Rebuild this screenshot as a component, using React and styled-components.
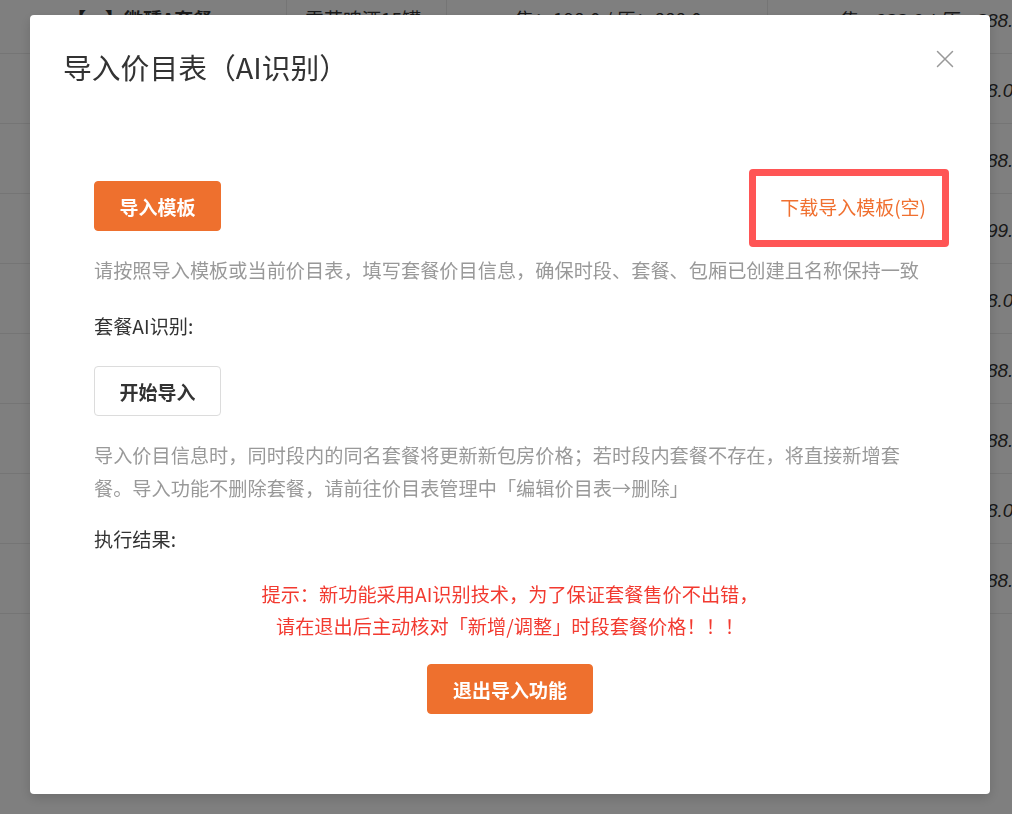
import styled, { createGlobalStyle } from "styled-components";

const GlobalStyle = createGlobalStyle`
    html, body {
        margin: 0;
        padding: 0;
        background: #ffffff;
    }
    body {
        font-family: "Noto Sans CJK SC", "Noto Sans", sans-serif;
        overflow: hidden;
    }
`;

// only the top row and the right price column peek out from behind the modal
const firstRow = ["【一】微醺A套餐", "雪花啤酒15罐", "售：198.0 / 原：888.0", "售：288.0 / 原：888.0"];
const prices = [
    "售：198.0 / 原：88.0",
    "售：288.0 / 原：888.0",
    "售：199.0 / 原：999.0",
    "售：168.0 / 原：88.0",
    "售：288.0 / 原：888.0",
    "售：238.0 / 原：888.0",
    "售：128.0 / 原：88.0",
    "售：188.0 / 原：888.0",
];

function CloseIcon() {
    return (
        <svg width="18" height="18" viewBox="0 0 18 18" fill="none">
            <path d="M1.5 1.5 L16.5 16.5 M16.5 1.5 L1.5 16.5" stroke="#999" strokeWidth="1.5" strokeLinecap="round" />
        </svg>
    );
}

export default function App() {
    return (
        <>
            <GlobalStyle />
            <Table>
                <Row>
                    <Cell $w="287px" $pad="67px" $bold>{firstRow[0]}</Cell>
                    <Cell $w="160px" $pad="18px">{firstRow[1]}</Cell>
                    <Cell $w="321px" $pad="68px">{firstRow[2]}</Cell>
                    <Cell $w="244px" $pad="69px" $price>{firstRow[3]}</Cell>
                </Row>
                {prices.map((p, i) => (
                    <Row key={i}>
                        <Cell $w="287px" $pad="67px" />
                        <Cell $w="160px" $pad="18px" />
                        <Cell $w="321px" $pad="68px" />
                        <Cell $w="244px" $pad="69px" $price>{p}</Cell>
                    </Row>
                ))}
            </Table>

            <Overlay>
                <Modal>
                    <Header>
                        <Title>导入价目表（AI识别）</Title>
                        <CloseBtn aria-label="close">
                            <CloseIcon />
                        </CloseBtn>
                    </Header>

                    <Body>
                        <ActionRow>
                            <Button $primary>导入模板</Button>
                            <DownloadLink>下载导入模板(空)</DownloadLink>
                        </ActionRow>
                        <Hint $top="23px">请按照导入模板或当前价目表，填写套餐价目信息，确保时段、套餐、包厢已创建且名称保持一致</Hint>

                        <Label $top="23px">套餐AI识别:</Label>
                        <ActionRow $top="23px">
                            <Button>开始导入</Button>
                        </ActionRow>
                        <Hint $top="23px">导入价目信息时，同时段内的同名套餐将更新新包房价格；若时段内套餐不存在，将直接新增套餐。导入功能不删除套餐，请前往价目表管理中「编辑价目表→删除」</Hint>

                        <Label $top="18px">执行结果:</Label>
                        <Warning>
                            提示：新功能采用AI识别技术，为了保证套餐售价不出错，<br />
                            请在退出后主动核对「新增/调整」时段套餐价格！！！
                        </Warning>
                        <Footer>
                            <Button $primary $wide>退出导入功能</Button>
                        </Footer>
                    </Body>
                </Modal>
            </Overlay>
        </>
    );
}

const Table = styled.div`
    margin-top: -16px;
    width: 1012px;
    overflow: hidden;
`;

const Row = styled.div`
    display: flex;
    height: 70px;
    border-bottom: 1px solid #ebebeb;
    box-sizing: border-box;
`;

const Cell = styled.div`
    flex: 0 0 ${p => p.$w};
    box-sizing: border-box;
    padding-left: ${p => p.$pad};
    border-right: 1px solid #ebebeb;
    display: flex;
    align-items: center;
    white-space: nowrap;
    overflow: hidden;
    font-family: ${p => (p.$price ? '"Liberation Sans", "Noto Sans CJK SC", sans-serif' : "inherit")};
    font-size: 19px;
    font-weight: ${p => (p.$bold ? 700 : 400)};
    font-style: ${p => (p.$price ? "italic" : "normal")};
    color: #333;
    &:last-child {
        border-right: none;
    }
`;

const Overlay = styled.div`
    position: fixed;
    inset: 0;
    background: rgba(0, 0, 0, 0.5);
    display: flex;
    align-items: flex-start;
    padding: 15px 0 0 30px;
`;

const Modal = styled.div`
    position: relative;
    width: 960px;
    background: #fff;
    border-radius: 4px;
    box-shadow: 0 4px 12px rgba(0, 0, 0, 0.15);
    padding: 0 64px 80px;
    box-sizing: border-box;
`;

const Header = styled.div`
    padding: 36px 0 0 33px;
    margin-left: -64px;
`;

const Title = styled.h2`
    margin: 0;
    font-size: 28.8px;
    line-height: 32px;
    font-weight: 400;
    color: #333;
`;

const CloseBtn = styled.button`
    position: absolute;
    top: 35px;
    right: 36px;
    padding: 0;
    border: none;
    background: transparent;
    cursor: pointer;
    display: flex;
`;

const Body = styled.div`
    margin-top: 98px;
    display: flex;
    flex-direction: column;
    gap: 22px;
`;

const ActionRow = styled.div`
    display: flex;
    align-items: center;
    justify-content: space-between;
    margin-top: ${p => (p.$top ? `calc(${p.$top} - 22px)` : "0")};
`;

const Button = styled.button`
    height: 50px;
    min-width: ${p => (p.$wide ? "166px" : "127px")};
    padding: 0 20px;
    box-sizing: border-box;
    border-radius: 4px;
    border: 1px solid ${p => (p.$primary ? "#ee702e" : "#dcdcdc")};
    background: ${p => (p.$primary ? "#ee702e" : "#fff")};
    color: ${p => (p.$primary ? "#fff" : "#333")};
    font-family: inherit;
    font-size: 19px;
    font-weight: 700;
    cursor: pointer;
`;

const DownloadLink = styled.a`
    position: relative;
    font-size: 19px;
    line-height: 27px;
    color: #f07030;
    cursor: pointer;

    &::before {
        content: "";
        position: absolute;
        top: -24px;
        bottom: -27px;
        left: -31px;
        right: -23px;
        border: 7px solid #ff5555;
        border-radius: 4px;
        pointer-events: none;
    }
`;

const Hint = styled.p`
    margin: ${p => (p.$top ? `calc(${p.$top} - 22px)` : "0")} 0 0;
    font-size: 19.2px;
    line-height: 33px;
    color: #999;
`;

const Label = styled.div`
    margin-top: ${p => (p.$top ? `calc(${p.$top} - 22px)` : "0")};
    font-size: 19.2px;
    line-height: 33px;
    color: #333;
`;

const Warning = styled.p`
    margin: 0;
    text-align: center;
    font-size: 19.2px;
    line-height: 32px;
    color: #f23a30;
`;

const Footer = styled.div`
    display: flex;
    justify-content: center;
`;
